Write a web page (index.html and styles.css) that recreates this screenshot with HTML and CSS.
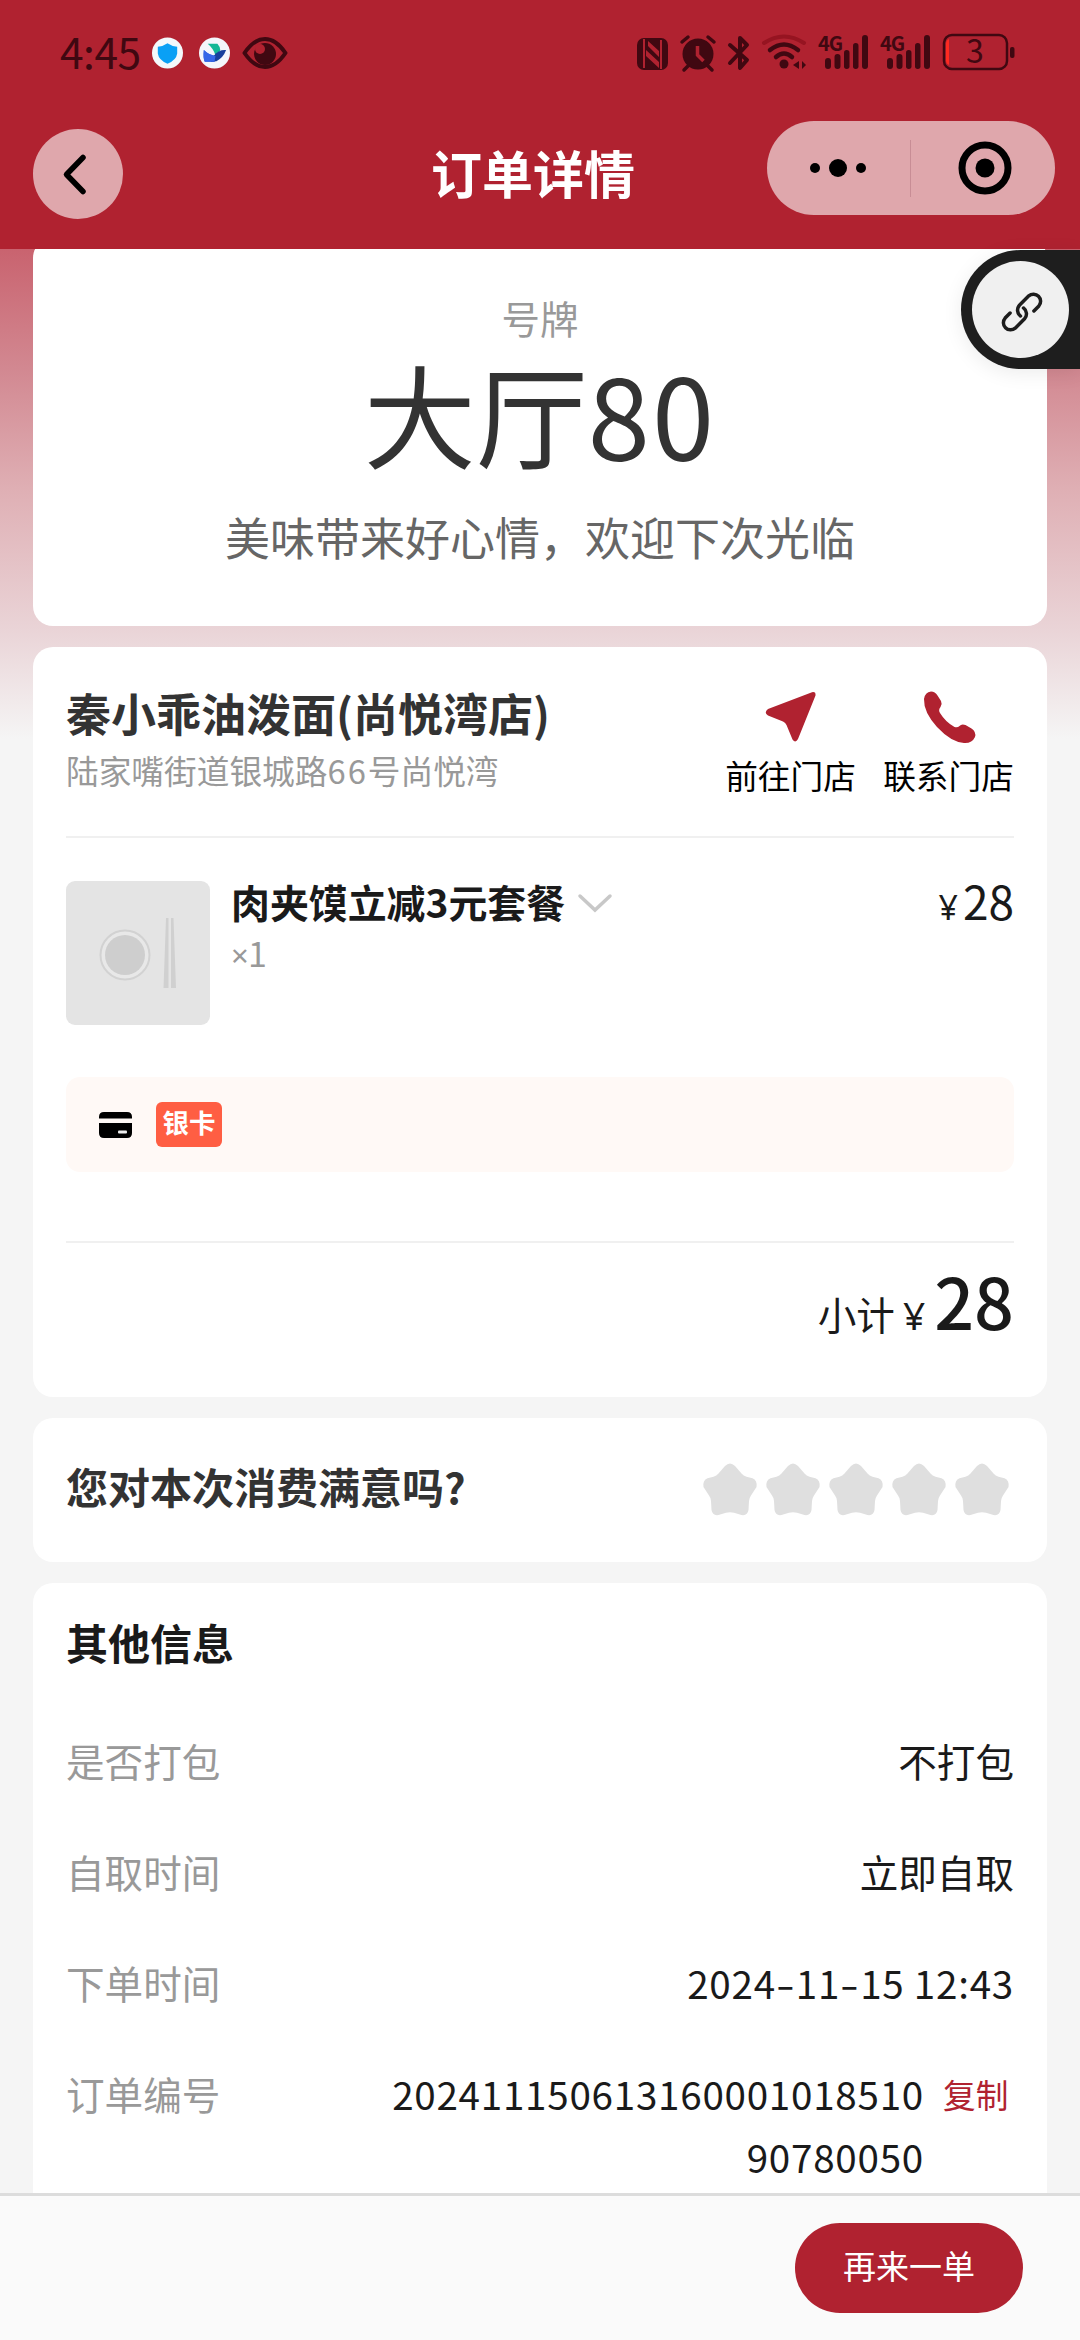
FILE: index.html
```html
<!DOCTYPE html>
<html lang="zh-CN">
<head>
<meta charset="utf-8">
<title>订单详情</title>
<link rel="stylesheet" href="styles.css">
</head>
<body>
<div class="screen">
  <header class="header">
    <div class="status">
      <div class="status-left">
        <span class="clock">4:45</span>
        <svg class="app-icon" viewBox="0 0 32 32"><circle cx="16" cy="16" r="16" fill="#f4f8fb"/><path d="M16 6q4 3 10 3.500v7q-1 7-10 10.500q-9-3.500-10-10.500v-7q6-.5 10-3.500z" fill="#0aa0f5"/></svg>
        <svg class="app-icon app-icon-bird" viewBox="0 0 32 32"><circle cx="16" cy="16" r="16" fill="#f4f6fb"/><path d="M9 6.500h10q3 3 3 7l-5 5q-2-7-8-12z" fill="#12b896"/><path d="M5 13q6 6 13 6l-2 6H6q-2-3-1-12z" fill="#3566e8"/><path d="M15 19q6-7 13-6q-3 8-10 11.500l-6 .5z" fill="#173f9c"/><path d="M5 13q5 5 12 6l-1 6H6q-2-3-1-12z" fill="#3566e8"/></svg>
        <svg class="eye" viewBox="0 0 46 34"><path d="M2.500 17Q12 3 23 3t20.500 14Q34 31 23 31T2.500 17z" fill="none" stroke="#400811" stroke-width="4" stroke-linejoin="round"/><circle cx="23" cy="18" r="11" fill="#400811"/><circle cx="18" cy="13" r="5" fill="#b02230"/></svg>
      </div>
      <svg class="status-icons" viewBox="0 0 380 40">
        <g fill="#400811">
          <rect x="0" y="5" width="31" height="32" rx="7"/>
          <path d="M7 35V6M24 36V7" stroke="#b02230" stroke-width="2"/>
          <path d="M11 8l11 10v6L11 13zM9 17l13 12v6L9 23z" fill="#b02230"/>
          <circle cx="61" cy="21" r="15.500"/>
          <path d="M45 9l6-5M77 9l-6-5M51 33l-4 4M71 33l4 4" stroke="#400811" stroke-width="3.500" stroke-linecap="round"/>
          <path d="M60.500 13v9l6 6" fill="none" stroke="#b02230" stroke-width="3.500"/>
          <path d="M93 12l17 15-7 8V5l7 7-17 18" fill="none" stroke="#400811" stroke-width="4" stroke-linejoin="round" stroke-linecap="round"/>
          <path d="M127 10q20-13 40 0" fill="none" stroke="#961421" stroke-width="4" stroke-linecap="round"/>
          <path d="M133 17q14-11 28 0M139 24q8-7 16 0" fill="none" stroke="#400811" stroke-width="4.500" stroke-linecap="round"/>
          <circle cx="147" cy="31" r="4.500"/>
          <path d="M162 28v8l-6-4zM165 28v8l4-4z"/>
          <g id="bars"><rect x="188" y="25" width="6" height="11" rx="3"/><rect x="197.500" y="21" width="6" height="15" rx="3"/><rect x="207" y="17" width="5.500" height="19" rx="2.700"/><rect x="216" y="10" width="5.500" height="26" rx="2.700"/><rect x="225" y="2" width="6" height="34" rx="3"/></g>
          <use href="#bars" x="62"/>
          <text x="181" y="18" class="net">4G</text>
          <text x="243" y="18" class="net">4G</text>
          <rect x="307" y="2" width="63" height="34" rx="8" fill="none" stroke="#400811" stroke-width="2.500"/>
          <path d="M312 6q-3 1-3 5v16q0 4 3 5z" fill="#ff2a20"/>
          <rect x="373" y="14" width="4.500" height="11" rx="2"/>
          <text x="338" y="30" class="charge">3</text>
        </g>
      </svg>
    </div>
    <div class="nav">
      <div class="back"><svg viewBox="0 0 24 40"><path d="M20 3L3.500 20 20 37" fill="none" stroke="#000" stroke-width="5.500" stroke-linecap="round" stroke-linejoin="round"/></svg></div>
      <h1 class="nav-title">订单详情</h1>
      <div class="capsule">
        <svg class="dots" viewBox="0 0 56 18"><circle cx="5" cy="9" r="5"/><circle cx="28" cy="9" r="9"/><circle cx="51" cy="9" r="5"/></svg>
        <span class="capsule-line"></span>
        <svg class="target" viewBox="0 0 54 54"><circle cx="27" cy="27" r="23" fill="none" stroke="#000" stroke-width="7"/><circle cx="27" cy="27" r="9.500"/></svg>
      </div>
    </div>
  </header>

  <main class="content">
    <section class="card ticket">
      <div class="ticket-label">号牌</div>
      <div class="ticket-number">大厅<span class="ticket-digits">80</span></div>
      <div class="ticket-note">美味带来好心情，欢迎下次光临</div>
    </section>

    <section class="card order">
      <div class="store">
        <div class="store-info">
          <h2 class="store-name">秦小乖油泼面(尚悦湾店)</h2>
          <div class="store-address">陆家嘴街道银城路<span class="wide">66</span>号尚悦湾</div>
        </div>
        <div class="store-actions">
          <div class="action">
            <svg viewBox="0 0 52 52"><path d="M47 1.200Q51 .5 50.500 4.500L33 48q-2.500 4.500-5.500.5L21.500 34q-1-2.500-3.500-3.500L3 24.500Q-1.500 21.500 3 18z" fill="#b02230"/></svg>
            <span>前往门店</span>
          </div>
          <div class="action">
            <svg viewBox="0 0 52 52"><path d="M1 8Q2 1 8 .5q4 0 6.500 4L18 10q1.500 3-.5 6-2.500 3-.5 6 5.500 9 14.500 14 3 1 5-1 2-2.500 6-1l6 3.500q5 3.500 3.500 8.500-3 6.500-11 6Q28 51 14 36 .5 21 1 8z" fill="#b02230"/></svg>
            <span>联系门店</span>
          </div>
        </div>
      </div>
      <div class="item">
        <svg class="thumb" viewBox="0 0 144 144"><rect width="144" height="144" rx="9" fill="#e4e4e4"/><circle cx="59" cy="74" r="24.500" fill="#e8e8e8" stroke="#d2d2d2" stroke-width="2"/><circle cx="59" cy="74" r="20" fill="#cecece"/><path d="M100 37h2.500v70h-5zM105 37h2.500l2.500 70h-5z" fill="#d0d0d0"/></svg>
        <div class="item-info">
          <div class="item-name">肉夹馍立减3元套餐<svg viewBox="0 0 34 18"><path d="M2 2l15 14L32 2" fill="none" stroke="#c8c8c8" stroke-width="3.500" stroke-linecap="round"/></svg></div>
          <div class="item-qty"><span class="times">×</span>1</div>
        </div>
        <div class="item-price"><span class="yen">¥</span>28</div>
      </div>
      <div class="member">
        <svg viewBox="0 0 33 26"><path d="M5 0h23q5 0 5 5v1.500H0V5q0-5 5-5zM0 11h33V21q0 5-5 5H5q-5 0-5-5z"/><rect x="19" y="18.500" width="9" height="3" rx="1" fill="#eee"/></svg>
        <span class="badge">银卡</span>
      </div>
      <div class="subtotal"><span class="sub-label">小计</span><span class="yen sub-yen">¥</span><span class="sub-amount">28</span></div>
    </section>

    <section class="card rating">
      <h2 class="question">您对本次消费满意吗?</h2>
      <svg class="stars" viewBox="0 0 310 52">
        <defs><path id="star" d="M22 3q5-5 10 0l6.500 7.500q2 2.300 5 3.200l6 1.600q5 2 4 8.700l-5.500 8.500q-2 3-2 5.500l-.5 9q-1 6-7 5l-7.500-2.200q-4-1-8 0L15.500 52q-6 1-7-5L8 38q0-3-2-5.500L.5 24q-1-6.700 4-8.700l6-1.600q3-.9 5-3.200z" fill="#dfdfdf"/></defs>
        <use href="#star"/><use href="#star" x="63"/><use href="#star" x="126"/><use href="#star" x="189"/><use href="#star" x="252"/>
      </svg>
    </section>

    <section class="card info">
      <h2 class="info-title">其他信息</h2>
      <div class="row"><span class="key">是否打包</span><span class="value">不打包</span></div>
      <div class="row"><span class="key">自取时间</span><span class="value">立即自取</span></div>
      <div class="row"><span class="key">下单时间</span><span class="value digits">2024<span class="dash">-</span>11<span class="dash">-</span>15 12:43</span></div>
      <div class="row"><span class="key">订单编号</span><span class="value digits">202411150613160001018510<br>90780050</span><span class="copy">复制</span></div>
    </section>
  </main>

  <footer class="footer"><div class="again">再来一单</div></footer>

  <div class="float-tab"><div class="float-disc"><svg viewBox="0 0 24 24"><g fill="none" stroke="#1c1c1c" stroke-width="1.900" stroke-linecap="round"><path d="M11.200 14.200a4 4 0 0 1-.6-5.900l5.100-5.100a3.900 3.900 0 0 1 5.500 5.500l-2.700 2.700"/><path d="M12.800 9.800a4 4 0 0 1 .6 5.900l-5.100 5.100a3.900 3.900 0 0 1-5.500-5.500l2.700-2.700"/></g></svg></div></div>
</div>
</body>
</html>
```

FILE: styles.css
```css
* { box-sizing: border-box; margin: 0; padding: 0; }
body {
  width: 1080px;
  height: 2340px;
  overflow: hidden;
  font-family: "Noto Sans CJK SC", "Noto Sans", sans-serif;
  color: #1a1a1a;
}
svg { display: block; flex: none; overflow: visible; }
h1, h2 { font-weight: 700; }
.screen { position: relative; width: 1080px; height: 2340px; display: flex; flex-direction: column; overflow: hidden; background: #f5f5f5; }

.header { height: 249px; flex: none; background: #b02230; }
.status { height: 106px; padding: 0 63px 0 60px; display: flex; justify-content: space-between; align-items: center; }
.status-left { display: flex; align-items: center; }
.clock { width: 92px; font: 400 42.500px/60px "Noto Sans CJK SC", sans-serif; margin-top: -4px; color: #400811; white-space: nowrap; letter-spacing: -.5px; }
.app-icon { width: 31px; height: 32px; }
.app-icon-bird { margin-left: 16px; }
.eye { width: 46px; height: 34px; margin-left: 12px; }
.status-icons { width: 380px; height: 40px; }
.net { font: 700 20px "Noto Sans CJK SC", sans-serif; letter-spacing: -1px; }
.charge { font: 400 32px "Noto Sans CJK SC", sans-serif; text-anchor: middle; }

.nav { height: 143px; padding: 0 25px 0 33px; display: grid; grid-template-columns: 288px 1fr 288px; align-items: start; }
.back { width: 90px; height: 90px; margin-top: 23px; border-radius: 50%; background: #dfa7ac; display: flex; align-items: center; justify-content: center; }
.back svg { width: 24px; height: 41px; margin-right: 6px; }
.nav-title { margin-top: 32px; padding-right: 22px; font-size: 51px; line-height: 68px; color: #fff; text-align: center; }
.capsule { width: 288px; height: 94px; margin-top: 15px; padding: 0 43px; border-radius: 47px; background: #dfa7ac; display: flex; align-items: center; }
.dots { width: 56px; height: 18px; }
.capsule-line { width: 2px; height: 57px; margin: 0 47px 0 44px; background: #c88d95; }
.target { width: 54px; height: 54px; }

.content { height: 1944px; flex: none; overflow: hidden; padding: 0 33px; display: flex; flex-direction: column; gap: 21px; background: linear-gradient(#c9636f 0, #d28891 120px, #dfafb4 240px, #ead5d8 385px, #f5f5f5 490px); }
.card { flex: none; background: #fff; border-radius: 20px; padding: 0 33px; }
.ticket { height: 388px; margin-top: -11px; padding-top: 53px; text-align: center; display: flex; flex-direction: column; }
.ticket-label { font-size: 38.500px; line-height: 52px; color: #999; }
.ticket-number { font-size: 112px; line-height: 140px; color: #333; margin-top: -1px; }
.ticket-digits { letter-spacing: 2px; }
.ticket-note { font-size: 45px; line-height: 60px; color: #666; margin-top: 25px; }

.order { height: 750px; }
.store { height: 191px; padding-top: 36px; display: flex; justify-content: space-between; border-bottom: 2px solid #f0f0f0; }
.store-name { font-size: 45px; line-height: 60px; color: #333; }
.store-address { font-size: 32.700px; line-height: 44px; margin-top: 5px; color: #999; }
.wide { letter-spacing: 2px; }
.store-actions { display: flex; gap: 27px; padding-top: 8px; }
.action { width: 131px; display: flex; flex-direction: column; align-items: center; color: #000; font-size: 32.700px; line-height: 44px; gap: 10px; }
.action svg { width: 52px; height: 52px; }
.item { height: 239px; padding-top: 43px; display: flex; }
.thumb { width: 144px; height: 144px; }
.item-info { margin-left: 21px; flex: 1; }
.item-name { font-size: 38.900px; line-height: 50px; font-weight: 700; margin-top: -5px; display: flex; align-items: center; gap: 13px; }
.item-name svg { width: 34px; height: 18px; margin-top: 4px; }
.item-qty { margin-top: 7px; font-size: 34px; line-height: 40px; color: #999; }
.times { display: inline-block; width: 17px; font-family: "Noto Sans", sans-serif; font-size: 31px; line-height: 38px; }
.item-price { font-size: 46px; line-height: 50px; margin-top: -6px; }
.yen { font-family: "Noto Sans", sans-serif; font-size: 34px; margin-right: 5px; }
.member { height: 95px; padding-left: 33px; display: flex; align-items: center; gap: 24px; border-radius: 14px; background: #fff9f6; }
.member svg { width: 33px; height: 26px; }
.badge { height: 45px; width: 66px; line-height: 39px; border-radius: 6px; text-align: center; font-size: 26.500px; font-weight: 700; color: #fff; background: #ff5e43; }
.subtotal { margin-top: 69px; height: 120px; border-top: 2px solid #f0f0f0; display: flex; justify-content: flex-end; align-items: baseline; line-height: 114px; }
.sub-label { font-size: 38.600px; }
.sub-yen { font-size: 39px; margin: 0 9px 0 8px; }
.sub-amount { font-size: 70px; font-weight: 500; }

.rating { height: 144px; padding-right: 34px; display: flex; align-items: center; justify-content: space-between; }
.question { font-size: 42px; line-height: 56px; color: #333; margin-top: -9px; }
.stars { width: 310px; height: 52px; margin-top: -3px; }

.info { height: 700px; padding-top: 31px; }
.info-title { font-size: 42px; line-height: 56px; height: 92px; }
.row { min-height: 111px; padding-top: 23px; display: flex; font-size: 38.600px; line-height: 63px; }
.key { color: #999; }
.value { flex: 1; text-align: right; }
.digits { letter-spacing: .75px; }
.dash { display: inline-block; width: 20px; text-align: center; transform: scaleX(1.4); }
.copy { width: 90px; padding-left: 19px; font-size: 32.700px; color: #b02230; }

.footer { height: 147px; flex: none; border-top: 3px solid #dcdcdc; background: #fafafa; padding: 27px 57px 0 0; display: flex; justify-content: flex-end; }
.again { width: 228px; height: 90px; border-radius: 45px; background: #b02230; color: #fff; font-size: 33px; line-height: 84px; text-align: center; }

/* floating shortcut docked to the right edge */
.float-tab { position: absolute; right: 0; top: 250px; width: 119px; height: 119px; padding: 11px; border-radius: 60px 0 0 60px; background: #1e1e1e; box-shadow: 0 4px 20px rgba(0,0,0,.08); }
.float-disc { width: 97px; height: 97px; border-radius: 50%; background: #f0f0f0; display: flex; align-items: center; justify-content: center; }
.float-disc svg { width: 44px; height: 44px; margin: 5px 0 0 2px; }
```
